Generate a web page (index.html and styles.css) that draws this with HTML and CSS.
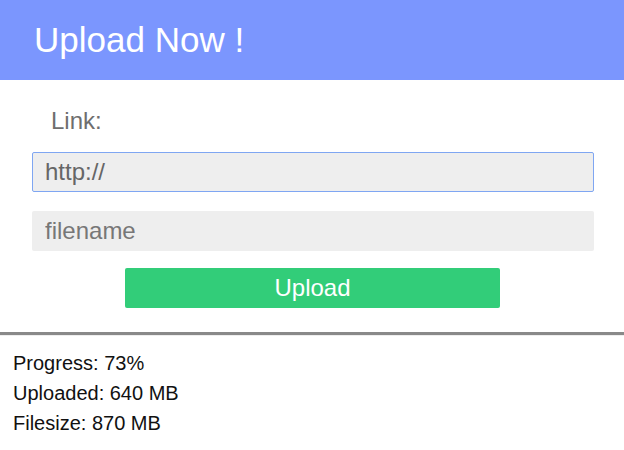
FILE: index.html
```html
<!DOCTYPE html>
<html>
<head>
<meta charset="utf-8">
<link rel="stylesheet" href="styles.css">
</head>
<body>
<div class="card">
  <div class="card-header">Upload Now !</div>
  <div class="card-body">
    <div class="label">Link:</div>
    <input class="field field-focus" type="text" value="http://">
    <input class="field" type="text" placeholder="filename">
    <div class="actions"><button class="btn">Upload</button></div>
  </div>
</div>
<div class="stats">
  <div class="stat">Progress: 73%</div>
  <div class="stat">Uploaded: 640 MB</div>
  <div class="stat">Filesize: 870 MB</div>
</div>
</body>
</html>
```
FILE: styles.css
```css
html, body {
  margin: 0;
  padding: 0;
  background: #fff;
  font-family: "Liberation Sans", Arial, sans-serif;
}
.card {
  background: #fff;
  border-bottom: 3px solid #898989;
  box-shadow: 0 0 1px rgba(0,0,0,0.4);
}
.card-header {
  height: 80px;
  line-height: 80px;
  background: #7b96fe;
  color: #fff;
  font-size: 35px;
  padding-left: 34px;
}
.card-body {
  display: flex;
  flex-direction: column;
  padding: 27px 30px 24px 32px;
}
.label {
  height: 28px;
  line-height: 28px;
  font-size: 24px;
  color: #6e6e6e;
  padding-left: 19px;
  margin-bottom: 17px;
}
.field {
  box-sizing: border-box;
  width: 562px;
  height: 40px;
  border: 1px solid transparent;
  border-radius: 2px;
  background: #eeeeee;
  font-family: "Liberation Sans", Arial, sans-serif;
  font-size: 24px;
  color: #666;
  padding: 0 12px;
  margin: 0 0 19px 0;
  outline: none;
}
.field::placeholder {
  color: #777;
}
.field-focus {
  border-color: #7fa6f2;
}
.actions {
  display: flex;
  padding-left: 93px;
  margin-top: -2px;
}
.btn {
  width: 375px;
  height: 40px;
  border: none;
  border-radius: 2px;
  background: #32cd79;
  color: #fff;
  font-family: "Liberation Sans", Arial, sans-serif;
  font-size: 24px;
  padding: 0;
}
.stats {
  padding: 13px 13px 0 13px;
}
.stat {
  font-size: 20px;
  line-height: 30px;
  color: #111;
}
```
